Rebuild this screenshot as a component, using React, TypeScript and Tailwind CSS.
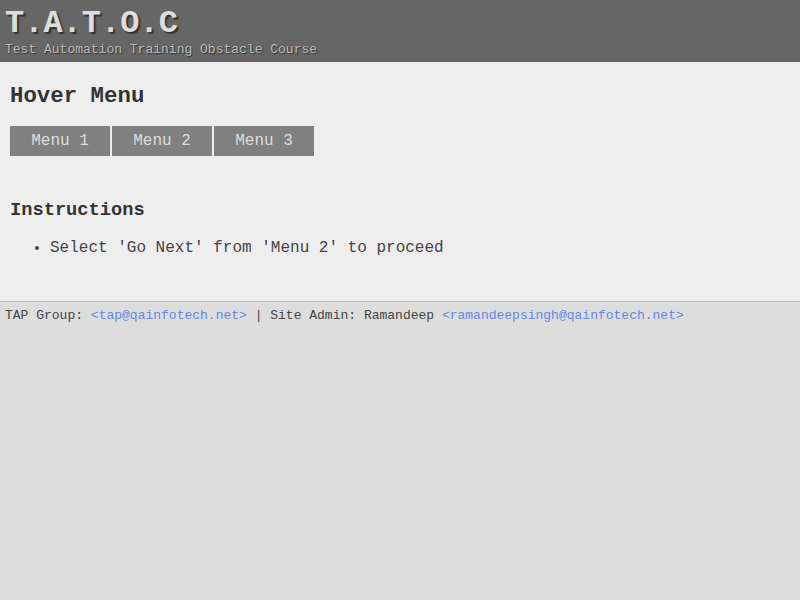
import React from "react";

export default function App() {
  return (
    <div
      className="min-h-[600px] w-full bg-[#dddddd] text-[#333333]"
      style={{ fontFamily: '"Courier New", "Nimbus Mono PS", "Nimbus Mono L", Courier, "Liberation Mono", monospace' }}
    >
      <div className="h-[62px] bg-[#666666] px-[5px] pt-[7px]">
        <div className="text-[32px] font-bold leading-[34px] text-[#dddddd] [text-shadow:2px_2px_1px_#333]">
          T.A.T.O.C
        </div>
        <div className="mt-[1px] text-[13px] leading-[15px] text-[#bbbbbb] [text-shadow:1px_1px_1px_#333]">
          Test Automation Training Obstacle Course
        </div>
      </div>
      <div className="h-[240px] border-b border-[#bbbbbb] bg-[#eeeeee] px-[10px]">
        <h2 className="pt-[21px] text-[22.4px] font-bold leading-[26px] text-[#333333]">Hover Menu</h2>
        <div className="mt-[17px] flex gap-[2px]">
          <div className="flex h-[30px] w-[100px] items-center justify-center bg-[#808080] text-[16px] text-[#dddddd]">Menu 1</div>
          <div className="flex h-[30px] w-[100px] items-center justify-center bg-[#808080] text-[16px] text-[#dddddd]">Menu 2</div>
          <div className="flex h-[30px] w-[100px] items-center justify-center bg-[#808080] text-[16px] text-[#dddddd]">Menu 3</div>
        </div>
        <h3 className="mt-[43px] text-[18.72px] font-bold leading-[22px] text-[#333333]">Instructions</h3>
        <ul className="mt-[18px] list-disc pl-[40px] text-[16px] leading-[18px] text-[#444444]">
          <li>Select 'Go Next' from 'Menu 2' to proceed</li>
        </ul>
      </div>
      <div className="px-[5px] pt-[6px] text-[13px] leading-[15px] text-[#444444]">
        TAP Group: <span className="text-[#6688dd]">&lt;tap@qainfotech.net&gt;</span> | Site Admin: Ramandeep{" "}
        <span className="text-[#6688dd]">&lt;ramandeepsingh@qainfotech.net&gt;</span>
      </div>
    </div>
  );
}
